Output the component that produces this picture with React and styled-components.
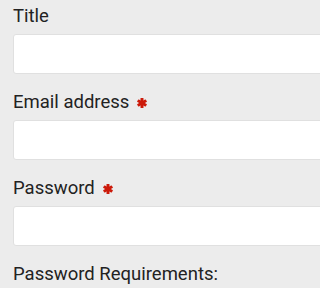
import styled, { createGlobalStyle } from "styled-components";

const GlobalStyle = createGlobalStyle`
  html, body {
    margin: 0;
    padding: 0;
    background: #ececec;
    overflow: hidden;
  }
  body {
    font-family: Roboto, "Liberation Sans", sans-serif;
    color: #222;
  }
`;

const Page = styled.div`
  width: 100%;
  overflow: hidden;
`;

const Form = styled.form`
  display: flex;
  flex-direction: column;
  gap: 17px;
  padding: 5px 0 0 13px;
  margin-right: -40px;
`;

const Group = styled.div`
  display: flex;
  flex-direction: column;
  gap: 7px;
`;

const Label = styled.label`
  display: flex;
  align-items: center;
  gap: 8px;
  font-size: 18.5px;
  line-height: 22px;
  color: #222;
`;

const Required = styled.svg`
  width: 10px;
  height: 10px;
  margin-top: 2px;
  fill: #cc1a0a;
`;

const Input = styled.input`
  box-sizing: border-box;
  height: 40px;
  width: 100%;
  border: 1px solid #e0e0e0;
  border-radius: 3px;
  background: #fff;
  font: inherit;
  padding: 0 10px;
  outline: none;
`;

function Asterisk() {
  return (
    <Required viewBox="0 0 10 10" aria-label="required">
      <g transform="translate(5 5)">
        <rect x="-1.5" y="-5" width="3" height="10" rx="0.6" />
        <rect x="-1.5" y="-5" width="3" height="10" rx="0.6" transform="rotate(60)" />
        <rect x="-1.5" y="-5" width="3" height="10" rx="0.6" transform="rotate(-60)" />
      </g>
    </Required>
  );
}

function Field({ label, type, required }) {
  return (
    <Group>
      <Label>
        {label}
        {required && <Asterisk />}
      </Label>
      <Input type={type} />
    </Group>
  );
}

export default function App() {
  return (
    <Page>
      <GlobalStyle />
      <Form>
        <Field label="Title" type="text" />
        <Field label="Email address" type="email" required />
        <Field label="Password" type="password" required />
        <Label>Password Requirements:</Label>
      </Form>
    </Page>
  );
}
